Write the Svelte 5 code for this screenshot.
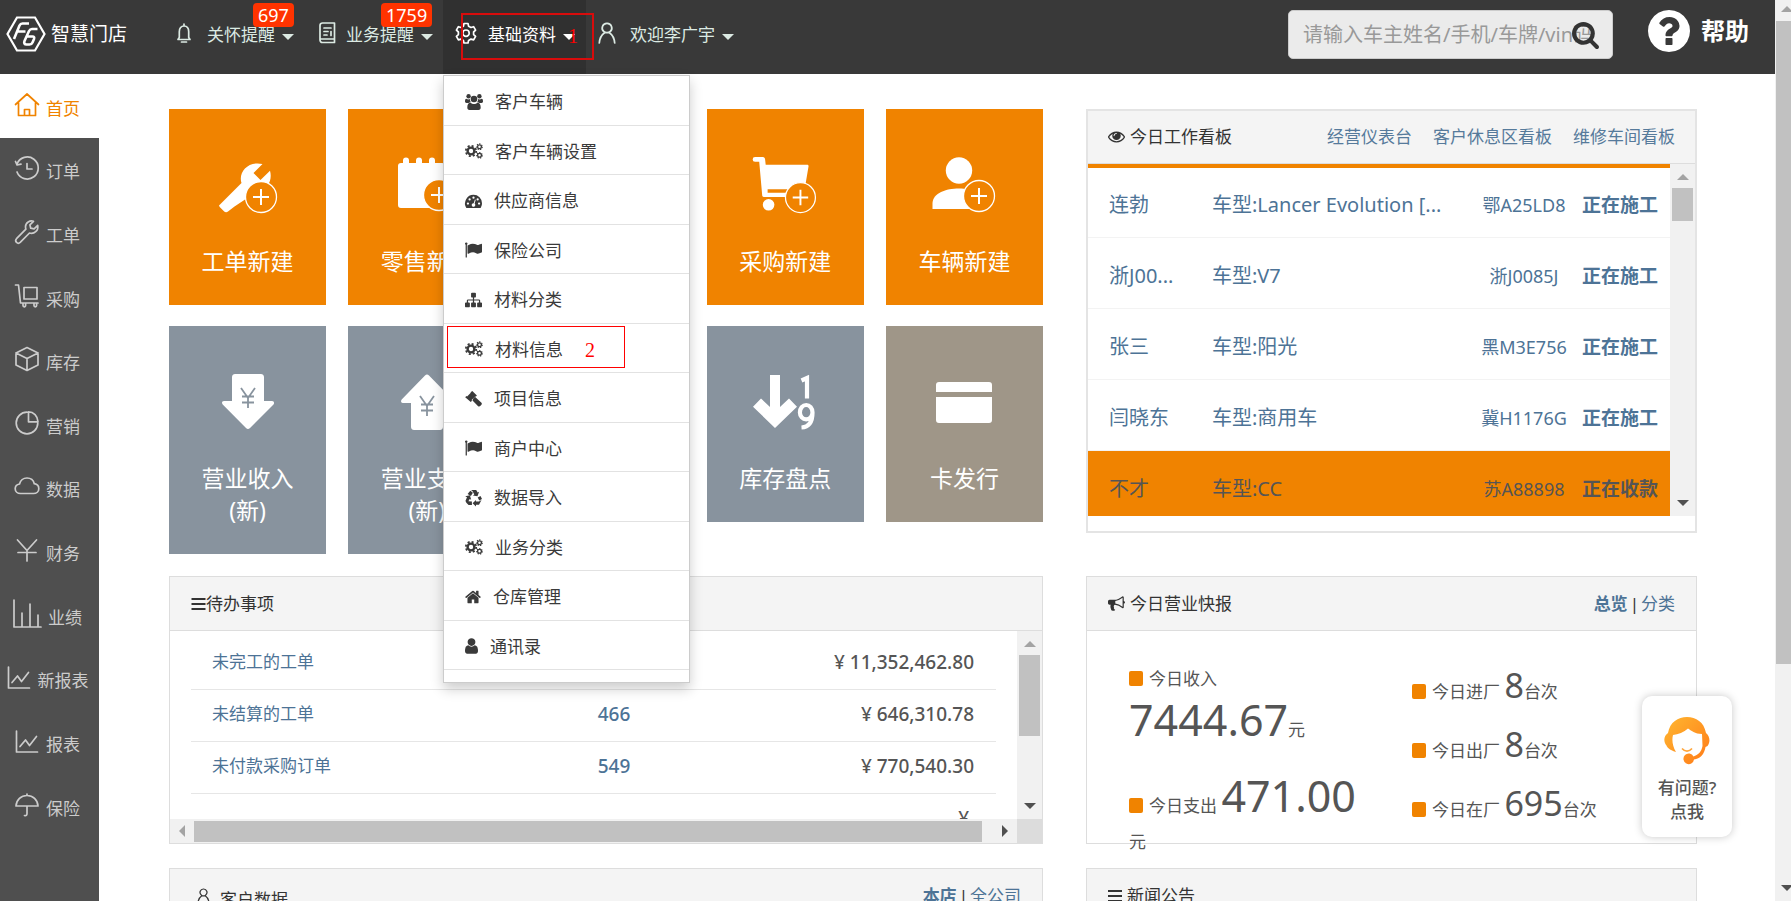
<script>
  const fa = (d) => `<path fill="currentColor" d="${d}"/>`;
  const gearTeeth = (cx, cy, r, w, n) => {
    const step = (2 * Math.PI * r) / n;
    return `<circle cx="${cx}" cy="${cy}" r="${r}" fill="none" stroke="currentColor" stroke-width="${w}" stroke-dasharray="${step * 0.5} ${step * 0.5}"/>`;
  };
  const plus = (cx, cy, bg) =>
    `<circle cx="${cx}" cy="${cy}" r="15.500" fill="${bg}" stroke="#fff" stroke-width="1.300"/><path d="M${cx - 8} ${cy}h16M${cx} ${cy - 8}v16" stroke="#fff" stroke-width="2" fill="none"/>`;
  const line = (d) =>
    `<path d="${d}" fill="none" stroke="currentColor" stroke-width="1.700" stroke-linecap="round" stroke-linejoin="round"/>`;

  const cogs =
    `<circle cx="6" cy="7.500" r="3.400" fill="none" stroke="currentColor" stroke-width="2.400"/>` +
    gearTeeth(6, 7.5, 5.2, 1.8, 8) +
    `<circle cx="14.500" cy="3.200" r="1.900" fill="none" stroke="currentColor" stroke-width="1.300"/>` +
    gearTeeth(14.5, 3.2, 2.8, 1.1, 7) +
    `<circle cx="14.500" cy="11.800" r="1.900" fill="none" stroke="currentColor" stroke-width="1.300"/>` +
    gearTeeth(14.5, 11.8, 2.8, 1.1, 7);

  const glyphs = {
    user: ['256 128 1280 1536', fa('M1536 1399q0 109-62.500 187t-150.500 78h-854q-88 0-150.500-78t-62.500-187q0-85 8.500-160.500t31.500-152 58.500-131 94-89 134.500-34.500q131 128 313 128t313-128q76 0 134.500 34.500t94 89 58.500 131 31.500 152 8.500 160.500zm-256-887q0 159-112.500 271.500t-271.500 112.500-271.500-112.500-112.500-271.500 112.500-271.500 271.500-112.500 271.500 112.500 112.500 271.500z')],
    home: ['64 128 1664 1536', fa('M1472 992v480q0 26-19 45t-45 19h-384v-384h-256v384h-384q-26 0-45-19t-19-45v-480q0-1 .5-3t.5-3l575-474 575 474q1 2 1 6zm223-69l-62 74q-8 9-21 11h-3q-13 0-21-7l-692-577-692 577q-12 8-24 7-13-2-21-11l-62-74q-8-10-7-23.500t11-21.500l719-599q32-26 76-26t76 26l244 204v-195q0-14 9-23t23-9h192q14 0 23 9t9 23v408l219 182q10 8 11 21.500t-7 23.500z')],
    flag: ['64 128 1728 1536', fa('M320 256q0 72-64 110v1266q0 13-9.500 22.500t-22.500 9.500h-64q-13 0-22.500-9.500t-9.500-22.500v-1266q-64-38-64-110 0-53 37.500-90.500t90.500-37.500 90.500 37.500 37.500 90.500zm1472 64v763q0 25-12.500 38.500t-39.500 27.500q-215 116-369 116-61 0-123.500-22t-108.500-48-115.500-48-142.500-22q-192 0-464 146-17 9-33 9-26 0-45-19t-19-45v-742q0-32 31-55 21-14 79-43 236-120 421-120 107 0 200 29t219 88q38 19 88 19 54 0 117.500-21t110-47 88-47 54.500-21q26 0 45 19t19 45z')],
    sitemap: ['0 128 1792 1536', fa('M1792 1248v320q0 40-28 68t-68 28h-320q-40 0-68-28t-28-68v-320q0-40 28-68t68-28h96v-192h-512v192h96q40 0 68 28t28 68v320q0 40-28 68t-68 28h-320q-40 0-68-28t-28-68v-320q0-40 28-68t68-28h96v-192h-512v192h96q40 0 68 28t28 68v320q0 40-28 68t-68 28h-320q-40 0-68-28t-28-68v-320q0-40 28-68t68-28h96v-192q0-52 38-90t90-38h512v-192h-96q-40 0-68-28t-28-68v-320q0-40 28-68t68-28h320q40 0 68 28t28 68v320q0 40-28 68t-68 28h-96v192h512q52 0 90 38t38 90v192h96q40 0 68 28t28 68z')],
    search: ['64 128 1664 1664', fa('M1216 832q0-185-131.500-316.500t-316.500-131.500-316.500 131.500-131.500 316.500 131.500 316.500 316.500 131.500 316.500-131.500 131.500-316.500zm512 832q0 52-38 90t-90 38q-54 0-90-38l-343-342q-179 124-399 124-143 0-273.500-55.500t-225-150-150-225-55.500-273.500 55.500-273.500 150-225 225-150 273.500-55.500 273.500 55.500 225 150 150 225 55.500 273.500q0 220-124 399l343 343q37 37 37 90z')],
    question: ['128 128 1536 1536', fa('M1024 1376v-192q0-14-9-23t-23-9h-192q-14 0-23 9t-9 23v192q0 14 9 23t23 9h192q14 0 23-9t9-23zm256-672q0-88-55.500-163t-138.500-116-170-41q-243 0-371 213-15 24 8 42l132 100q7 6 19 6 16 0 25-12 53-68 86-92 34-24 86-24 48 0 85.500 26t37.500 59q0 38-20 61t-68 45q-63 28-115.500 86.500t-52.500 125.500v36q0 14 9 23t23 9h192q14 0 23-9t9-23q0-19 21.500-49.500t54.500-49.500q32-18 49-28.500t46-35 44.500-48 28-60.500 12.500-81zm384 192q0 209-103 385.500t-279.500 279.500-385.500 103-385.500-103-279.500-279.500-103-385.500 103-385.500 279.500-279.500 385.500-103 385.500 103 279.500 279.500 103 385.500z')],
    eye: ['0 384 1792 1152', fa('M1664 960q-152-236-381-353 61 104 61 225 0 185-131.500 316.500t-316.500 131.500-316.500-131.500-131.500-316.500q0-121 61-225-229 117-381 353 133 205 333.500 326.500t434.500 121.500 434.500-121.500 333.500-326.500zm-720-384q0-20-14-34t-34-14q-125 0-214.500 89.500t-89.500 214.500q0 20 14 34t34 14 34-14 14-34q0-86 61-147t147-61q20 0 34-14t14-34zm848 384q0 34-20 69-140 230-376.500 368.500t-499.500 138.500-499.500-139-376.500-368q-20-35-20-69t20-69q140-229 376.500-368t499.500-139 499.500 139 376.500 368q20 35 20 69z')],
    bullhorn: ['0 128 1792 1536', fa('M1664 640q53 0 90.500 37.500t37.500 90.500-37.500 90.500-90.500 37.500v384q0 52-38 90t-90 38q-417-347-812-380-58 19-91 66t-31 100.500 40 92.500q-20 33-23 65.500t6 58 33.500 55 48 50 61.500 50.500q-29 58-111.500 83t-168.500 11.500-132-55.500q-7-23-29.500-87.500t-32-94.500-23-89-15-101 3.500-98.500 22-110.500h-122q-66 0-113-47t-47-113v-192q0-66 47-113t113-47h480q435 0 896-384 52 0 90 38t38 90v384zm-128 604v-954q-394 302-768 343v270q377 42 768 341z')],
    cogs: ['0 0 18 15', cogs],
    users: ['0 0 18 16', `<g fill="currentColor"><circle cx="9" cy="5" r="3.300"/><path d="M4.500 16C3 16 2.300 15 2.300 13.600c0-3 1-4.900 3.200-4.900 1 .9 2.200 1.300 3.500 1.300s2.500-.4 3.500-1.300c2.200 0 3.200 1.900 3.200 4.900 0 1.400-.7 2.400-2.200 2.400z"/><circle cx="3.600" cy="2.300" r="2.200"/><circle cx="14.400" cy="2.300" r="2.200"/><path d="M1.500 9C.5 9 0 8.500 0 7.600 0 6 .3 4.800 1.300 4.800c1.200.8 2.500.9 3.600.3 0 1.400.3 2.400 1 3.100-1 0-1.800.2-2.400.8zM16.500 9c1 0 1.500-.5 1.500-1.400 0-1.600-.3-2.800-1.300-2.800-1.200.8-2.500.9-3.600.3 0 1.400-.3 2.400-1 3.100 1 0 1.800.2 2.400.8z"/></g>`],
    gauge: ['0 0 18 15', `<path fill="currentColor" fill-rule="evenodd" d="M9 1a9 9 0 0 1 9 9c0 1.700-.5 3.300-1.300 4.600-.2.300-.4.400-.7.400H2c-.3 0-.5-.1-.7-.4A9 9 0 0 1 9 1zM3.100 9a1.200 1.200 0 1 0 0 2.400 1.200 1.200 0 0 0 0-2.400zM4.900 4.600a1.200 1.200 0 1 0 0 2.400 1.200 1.200 0 0 0 0-2.400zM9 2.800a1.200 1.200 0 1 0 0 2.400 1.200 1.200 0 0 0 0-2.400zM13.400 4.600a1.200 1.200 0 1 0 0 2.400 1.200 1.200 0 0 0 0-2.400zM14.900 9a1.200 1.200 0 1 0 0 2.400 1.200 1.200 0 0 0 0-2.400zM10.500 5.800l-1.300 4a1.900 1.900 0 1 0 1 .4l1.200-4z"/>`],
    gavel: ['0 0 17 16', `<g fill="currentColor"><path d="M7.300 0l4.600 4.600-1.200 1.200-.6-.3L6.600 9l.4.700-1.200 1.200L.2 6.300l1.200-1.200.7.300L5.800 1.800l-.2-.6z"/><path d="M8.200 7.400l1.700-1.700 6.300 5.700c.8.800.9 1.700.2 2.400l-1.200 1.300c-.7.700-1.600.6-2.300-.2L7.500 9.600z"/></g>`],
    recycle: ['0 0 17 16', `<g fill="currentColor"><path d="M6 0h5.200l1.500 2.500 1.400-.8-1.600 4.600-4.600-.8 1.400-.9L7.400.9z"/><path d="M5.300.7l2.600 2-2 3.300-3.300-1.900z"/><path d="M.2 6.200l4.700-1 1.300 4.500-1.500-.7-1.300 2.300 3.500.2V15H3.600C1.800 13.500.5 11.500.5 10.700L2 7.300z"/><path d="M16.500 10l-2.500 4.800h-3V16.500L7.600 13.200l3.400-3.300v1.700h3z"/><path d="M12.700 7.600l2.800-1.700 1.500 3-2.700 1.500z"/></g>`],
    bars: ['0 0 14 14', `<path fill="currentColor" d="M0 1h14v2H0zM0 6h14v2H0zM0 11h14v2H0z"/>`],
    person: ['0 0 18 22', line('M9 1.300a4.700 4.700 0 0 1 3 8.400c-.7.700-1.600 1-3 1s-2.300-.3-3-1a4.700 4.700 0 0 1 3-8.400zM1.300 21c.3-4.700 2-8 5.300-10.300M16.700 21c-.3-4.700-2-8-5.300-10.300')],
    bell: ['0 0 14 21', line('M7 1v1.500M1 16.500h12l-1.300-2V8.700C11.700 5 9.800 3 7 3S2.300 5 2.300 8.700v5.800zM4.500 19h5')],
    note: ['0 0 17 22', line('M3.500 1h12v19.500H3.500C2 20.500 1 19.500 1 18V3.500C1 2 2 1 3.500 1zM1.200 17H15M5 6h7M5 9.500h4M5 13h3M12 9.500v4')],
    gear: ['0 0 20 22', line('M8 1.500h4l.6 2.700 2.400 1.300 2.600-.8 2 3.500-2 1.800v2.600l2 1.800-2 3.500-2.600-.8-2.400 1.300L12 21H8l-.6-2.600L5 17.100l-2.600.8-2-3.500 2-1.800V10l-2-1.800 2-3.500 2.600.8 2.400-1.300zM10 8a3.200 3.200 0 1 1 0 6.400A3.200 3.200 0 0 1 10 8z')],
    s_home: ['0 0 26 26', line('M1.500 12.500L13 2l11.500 10.500M4.500 11v12.500h17V11M10.500 23.500v-6h5v6')],
    s_history: ['0 0 26 26', line('M3 9A11 11 0 1 1 3 17M1.500 6.500L3 10l4-.8M13 8.500V14h5')],
    s_wrench: ['0 0 26 26', line('M19.500 2.300c-3.500-1.300-8 1.300-8 5.500 0 1 .1 1.700.4 2.400L2.500 19.700c-2.300 2.700 1.200 6 3.700 3.700l9.300-9.400c4.500 1.500 9.300-2.400 8.200-7.600l-3.600 3.400-3.400-.6-.8-3.400z')],
    s_cart: ['0 0 26 26', line('M1.500 2h3l2 18h17.500M10 4.500h13v11.500H10zM9 20v2.500a1.300 1.300 0 0 0 2.600 0V20M20 20v2.500a1.300 1.300 0 0 0 2.600 0V20')],
    s_box: ['0 0 26 26', line('M13 1.500l11 5.500v12l-11 5.500L2 19V7zM2 7l11 5.500L24 7M13 12.500v12')],
    s_pie: ['0 0 26 26', line('M13 2.200a10.800 10.800 0 1 0 10.800 10.800M14.500 1.800v10h9.500M14.500 1.800c5 0 9.300 4 9.500 10')],
    s_cloud: ['0 0 26 26', line('M6.500 20.500c-3 0-5.300-2-5.300-4.800 0-2.400 1.700-4.300 4.300-4.700C6.500 7.400 9.200 5 13 5c4 0 6.500 2.400 7.300 5.700 2.500.4 4.500 2.300 4.500 5 0 2.800-2.300 4.800-5.300 4.800z')],
    s_yen: ['0 0 26 26', line('M3.500 3L13 13.500 22.500 3M13 13.500V24M4 15.500h18')],
    s_bars: ['0 0 30 30', line('M2 1v27h27M10 14v14M18 5v23M26 16v12')],
    s_line: ['0 0 26 26', line('M2.500 3v21h21M6 18.500L11.500 12l4 5.500 7-9')],
    s_umbrella: ['0 0 26 26', line('M2 14C2.500 7.500 7 3.500 13 3.500S23.500 7.500 24 14zM13 2v1M13 14v7.500c0 1.800-.9 2.500-2.500 2')],
    t_wrench: ['0 0 60 56', `<path fill="#fff" d="M1 48.500L23.500 26C20 15.500 30 3.500 44.500 7L35.500 16l7 7L52 13.800c2.600 9-2 18.500-11 19.600L16.500 49.500 10 54.500c-1.500 1.300-3 .8-4.300-.6l-4-4z"/>${plus(43, 40, '#f08300')}`],
    t_pad: ['0 0 60 56', `<path fill="#fff" d="M4 6h2V3.500a3 3 0 0 1 6 0V6h7V3.500a3 3 0 0 1 6 0V6h7V3.500a3 3 0 0 1 6 0V6h7a3 3 0 0 1 3 3v39a3 3 0 0 1-3 3H4a3 3 0 0 1-3-3V9a3 3 0 0 1 3-3z"/>${plus(42, 38, '#f08300')}`],
    t_cart: ['0 0 68 58', `<path fill="#fff" fill-rule="evenodd" d="M3 0h8c1.500 0 2.300 1 2.400 2.500L14 8h43c1 0 1.600.8 1.400 1.700L53 41.500H12c-1 0-1.500-.6-1.600-1.500L7.300 5H3a2.400 2.400 0 0 1 0-5zM16 33.500V37h32l1-3.500z"/><circle cx="17" cy="49.500" r="6" fill="#fff"/>${plus(50, 42, '#f08300')}`],
    t_person: ['0 0 64 56', `<circle cx="27" cy="13.500" r="13.200" fill="#fff"/><path fill="#fff" d="M.5 52v-6C1 36 14 31.500 27 31.500S52 36 53 46v6z"/>${plus(47, 39, '#f08300')}`],
    t_down: ['0 0 52 56', `<path fill="#fff" d="M13 0h26c1.500 0 3 1.300 3 3v24h8c2 0 2.700 2 1.500 3.500L28 54c-1.300 1.300-2.700 1.300-4 0L.7 30.500C-.6 29 0 27 2 27h8V3c0-1.700 1.500-3 3-3z"/><path d="M19 14l7 10 7-10M26 24v10M20 22.500h12M20 28.500h12" fill="none" stroke="#88939e" stroke-width="1.800"/>`],
    t_up: ['0 0 52 56', `<path fill="#fff" d="M13 56h26c1.500 0 3-1.300 3-3V29h8c2 0 2.700-2 1.500-3.500L28 1.500c-1.300-1.300-2.700-1.300-4 0L.7 25.500C-.6 27 0 29 2 29h8v24c0 1.700 1.500 3 3 3z"/><path d="M19 22l7 10 7-10M26 32v10M20 30.500h12M20 36.500h12" fill="none" stroke="#88939e" stroke-width="1.800"/>`],
    t_sort: ['0 0 64 56', `<path fill="#fff" d="M17 1h10v32l9-8.500 8 8.200L22 54 0 32.700l8-8.200L17 33z"/><path fill="none" stroke="#fff" stroke-width="4.200" d="M48.500 6.500l5.500-2.500v20.500M59.500 38.500a6.300 7.500 0 1 0-12.600 0 6.300 6.800 0 0 0 12.600 0c0 9-3 14.500-11 15"/>`],
    t_card: ['0 0 56 56', `<path fill="#fff" d="M3 8h50a3 3 0 0 1 3 3v7H0v-7a3 3 0 0 1 3-3zM0 23h56v23a3 3 0 0 1-3 3H3a3 3 0 0 1-3-3z"/>`],
    agent: ['0 0 46 46', `<defs><linearGradient id="hair" x1="0" y1="0" x2="1" y2="1"><stop offset="0" stop-color="#ffb730"/><stop offset="1" stop-color="#ff7a18"/></linearGradient></defs><path fill="url(#hair)" d="M4 16C6 5 14 0 23 0s17 5 19 16c4 3 4.500 9.500 1.500 13l-2 1C40.500 37 36 42 30 42.500a5.300 5.300 0 1 1-.5-3C34 38 37.500 35 38.500 29l-.5-12C31 17 27 13.500 24 11.500 20 15 14 17.500 9 18c-1.300 5-.5 11 3 17C5 33 3 30 2.500 28.500-.7 25-.5 19 4 16z"/><path d="M18 31.500c3 3.500 7 3.500 10 0" fill="none" stroke="#ffa53a" stroke-width="1.600"/>`]
  };

  const side = [
    ['s_home', '首页'], ['s_history', '订单'], ['s_wrench', '工单'], ['s_cart', '采购'],
    ['s_box', '库存'], ['s_pie', '营销'], ['s_cloud', '数据'], ['s_yen', '财务'],
    ['s_bars', '业绩'], ['s_line', '新报表'], ['s_line', '报表'], ['s_umbrella', '保险']
  ];
  const menu = [
    ['users', '客户车辆', 18], ['cogs', '客户车辆设置', 18], ['gauge', '供应商信息', 17], ['flag', '保险公司', 17],
    ['sitemap', '材料分类', 17], ['cogs', '材料信息', 18], ['gavel', '项目信息', 17], ['flag', '商户中心', 17],
    ['recycle', '数据导入', 17], ['cogs', '业务分类', 18], ['home', '仓库管理', 16], ['user', '通讯录', 13]
  ];
  const tiles = [
    ['t_wrench', '工单新建', '', 'orange', 1, 60], ['t_pad', '零售新建', '', 'orange', 2, 60],
    ['t_cart', '采购新建', '', 'orange', 4, 68], ['t_person', '车辆新建', '', 'orange', 5, 64],
    ['t_down', '营业收入', '(新)', 'slate', 1, 52], ['t_up', '营业支出', '(新)', 'slate', 2, 52],
    ['t_sort', '库存盘点', '', 'slate', 4, 64], ['t_card', '卡发行', '', 'taupe', 5, 56]
  ];
  const jobs = [
    ['连勃', '车型:Lancer Evolution [...', '鄂A25LD8', '正在施工'],
    ['浙J00...', '车型:V7', '浙J0085J', '正在施工'],
    ['张三', '车型:阳光', '黑M3E756', '正在施工'],
    ['闫晓东', '车型:商用车', '冀H1176G', '正在施工'],
    ['不才', '车型:CC', '苏A88898', '正在收款']
  ];
  const todos = [
    ['未完工的工单', '', '¥ 11,352,462.80'],
    ['未结算的工单', '466', '¥ 646,310.78'],
    ['未付款采购订单', '549', '¥ 770,540.30'],
    ['', '', '¥']
  ];
  const visits = [['今日进厂', '8'], ['今日出厂', '8'], ['今日在厂', '695']];
</script>

{#snippet icon(name, w, h)}
  <svg width={w} height={h} viewBox={glyphs[name][0]} aria-hidden="true">{@html glyphs[name][1]}</svg>
{/snippet}

<div class="shell">
  <div class="page">
    <header>
      <a class="logo" href="#home">
        <svg width="40" height="36" viewBox="0 0 40 36" aria-hidden="true">
          <path d="M11 1.500h18L38.500 18 29 34.500H11L1.500 18z" fill="none" stroke="#fff" stroke-width="2.200" />
          <path d="M23 7.500h-6.500c-1.500 0-2.400.7-3 2L8 23M11.500 15.500h8M31.500 13h-5.500c-1.500 0-2.300.7-3 2l-4.500 10c-.8 2 0 3.500 2 3.500h3c1.500 0 2.500-.8 3-2l1.500-3.500c.6-1.500 0-2.500-1.500-2.500h-5" fill="none" stroke="#fff" stroke-width="2.600" />
        </svg>
        <span>智慧门店</span>
      </a>
      <nav class="top">
        <button class="bell">{@render icon('bell', 14, 21)}<span>关怀提醒</span><i class="caret"></i><b class="badge">697</b></button>
        <button class="note">{@render icon('note', 17, 22)}<span>业务提醒</span><i class="caret"></i><b class="badge">1759</b></button>
        <div class="open">
          <button>{@render icon('gear', 20, 22)}<span>基础资料</span><i class="caret"></i></button>
          <div class="mark"><em>1</em></div>
          <ul class="menu">
            {#each menu as [name, label, w], i}
              <li>
                <a href="#menu">{@render icon(name, w, 16)}<span>{label}</span></a>
                {#if i === 5}<div class="mark second"><em>2</em></div>{/if}
              </li>
            {/each}
          </ul>
        </div>
        <button class="me">{@render icon('person', 18, 22)}<span>欢迎李广宇</span><i class="caret"></i></button>
      </nav>
      <form class="search">
        <input type="text" aria-label="搜索" placeholder="请输入车主姓名/手机/车牌/vin码" />
        <button type="button" aria-label="搜索">{@render icon('search', 27, 27)}</button>
      </form>
      <a class="help" href="#help">{@render icon('question', 42, 42)}<span>帮助</span></a>
    </header>

    <div class="body">
      <nav class="side">
        {#each side as [name, label], i}
          <a href="#side" class:active={i === 0}>{@render icon(name, name === 's_bars' ? 30 : 26, name === 's_bars' ? 30 : 26)}<span>{label}</span></a>
        {/each}
      </nav>

      <main>
        <section class="tiles">
          {#each tiles as [name, label, extra, tone, col, w]}
            <a href="#tile" class="tile {tone} c{col}">
              {@render icon(name, w, name === 't_cart' ? 58 : 56)}
              <span>{label}</span>
              {#if extra}<span>{extra}</span>{/if}
            </a>
          {/each}
        </section>

        <section class="panel board">
          <h2>{@render icon('eye', 17, 12)}<span>今日工作看板</span>
            <span class="links"><a href="#a">经营仪表台</a><a href="#b">客户休息区看板</a><a href="#c">维修车间看板</a></span>
          </h2>
          <div class="scroll">
            <table class="jobs">
              <tbody>
                {#each jobs as [who, car, plate, state], i}
                  <tr class:hot={i === 4}><td class="who">{who}</td><td class="car">{car}</td><td class="plate">{plate}</td><td class="state">{state}</td></tr>
                {/each}
              </tbody>
            </table>
            <div class="vbar"><i class="up"></i><i class="thumb"></i><i class="down"></i></div>
          </div>
        </section>

        <section class="panel todo">
          <h2 class="tight">{@render icon('bars', 15, 14)}<span>待办事项</span></h2>
          <div class="scroll">
            <div class="rows">
              <table>
                <tbody>
                  {#each todos as [label, count, sum]}
                    <tr><td class="label">{label}</td><td class="count">{count}</td><td class="sum" class:lone={!label}>{sum}</td></tr>
                  {/each}
                </tbody>
              </table>
            </div>
            <div class="vbar"><i class="up"></i><i class="thumb"></i><i class="down"></i></div>
          </div>
          <div class="hbar"><i class="left"></i><i class="thumb"></i><i class="right"></i><i class="corner"></i></div>
        </section>

        <section class="panel report">
          <h2>{@render icon('bullhorn', 17, 15)}<span>今日营业快报</span>
            <span class="tabs"><a href="#all"><b>总览</b></a><span>|</span><a href="#kind">分类</a></span>
          </h2>
          <div class="figures">
            <div class="money">
              <p><i class="dot"></i>今日收入<br /><strong>7444.67</strong>元</p>
              <p><i class="dot"></i>今日支出 <strong>471.00</strong><br />元</p>
            </div>
            <div class="visits">
              {#each visits as [label, n]}
                <p><i class="dot"></i>{label} <strong>{n}</strong>台次</p>
              {/each}
            </div>
          </div>
        </section>

        <section class="panel">
          <h2 class="low">{@render icon('person', 13, 18)}<span class="drop">客户数据</span>
            <span class="tabs"><a href="#shop"><b>本店</b></a><span>|</span><a href="#corp">全公司</a></span>
          </h2>
        </section>
        <section class="panel">
          <h2>{@render icon('bars', 14, 14)}<span>新闻公告</span></h2>
        </section>
      </main>
    </div>

    <button class="float">{@render icon('agent', 46, 46)}<span>有问题?<br />点我</span></button>
  </div>
  <div class="pagebar"><i class="up"></i><i class="thumb"></i><i class="down"></i></div>
</div>

<style>
  :global(body) { margin: 0; overflow: hidden; }
  .shell {
    display: flex; height: 100vh; overflow: hidden; background: #fff; color: #333;
    font: 17px/24px "Noto Sans", "Noto Sans CJK SC", sans-serif;
  }
  .shell *, .shell { box-sizing: border-box; }
  a { color: inherit; text-decoration: none; }
  button { border: 0; padding: 0; background: none; color: inherit; font: inherit; cursor: pointer; }
  i, em { font-style: normal; }
  ul, p, h2 { margin: 0; padding: 0; list-style: none; }
  svg { display: block; flex: none; overflow: visible; }
  .page { flex: 1; min-width: 0; display: flex; flex-direction: column; position: relative; }

  header { height: 74px; flex: none; display: flex; background: #393939; color: #dceae3; position: relative; z-index: 2; }
  .logo { display: flex; align-items: center; gap: 5px; width: 166px; padding: 0 0 6px 6px; color: #fff; font-size: 19px; }
  .top { display: flex; flex: 1; }
  .top button { display: flex; align-items: center; height: 100%; padding-bottom: 8px; position: relative; white-space: nowrap; }
  .top button span { padding-top: 4px; }
  .caret { border: 6px solid transparent; border-top-color: currentColor; border-bottom: 0; margin: 8px 0 0 7px; }
  .bell { width: 153px; padding-left: 11px; }
  .bell span { margin-left: 16px; }
  .note { width: 124px; }
  .note span { margin-left: 10px; }
  .badge {
    position: absolute; top: 3px; left: 87px; padding: 0 5px; border-radius: 4px; background: #f30;
    color: #fff; font-weight: 400; font-size: 18px; line-height: 24px;
  }
  .note .badge { left: 62px; }
  .open { position: relative; width: 143px; padding-left: 13px; background: #303030; color: #fff; }
  .open button span { margin-left: 12px; }
  .me { margin-left: 12px; }
  .me span { margin-left: 14px; }
  .mark { position: absolute; left: 18px; top: 13px; width: 133px; height: 47px; border: 2px solid #d80c0c; pointer-events: none; }
  .mark em { position: absolute; right: 14px; top: 9px; color: #f00; font: 20px/24px "Liberation Serif", serif; }
  .mark.second { left: 3px; top: 2px; width: 178px; height: 42px; border: 1px solid #f00; }
  .mark.second em { right: 29px; top: 11px; }

  .menu {
    position: absolute; left: 0; top: 75px; width: 247px; padding-bottom: 12px; background: #fff; color: #3a3a3a;
    border: 1px solid #ccc; box-shadow: 0 6px 12px rgba(0, 0, 0, 0.2); line-height: 1.5;
  }
  .menu li { position: relative; border-bottom: 1px solid #e2e2e2; }
  .menu a { display: flex; align-items: center; gap: 12px; padding: 13px 0 10px 21px; }

  .search { position: relative; width: 325px; height: 49px; margin-top: 10px; }
  .search input {
    width: 100%; height: 100%; padding: 0 14px; border: 1px solid #ccc; border-radius: 5px; background: #ebebeb;
    font: inherit; font-size: 20px; color: #555;
  }
  .search input::placeholder { color: #999; opacity: 1; }
  .search button { position: absolute; right: 14px; top: 12px; color: #333; }
  .help { display: flex; gap: 11px; width: 162px; padding: 10px 0 0 35px; color: #fff; font-size: 24px; font-weight: 700; line-height: 42px; white-space: nowrap; }

  .body { flex: 1; min-height: 0; display: flex; }
  .side { width: 99px; flex: none; display: grid; grid-template-rows: repeat(13, 1fr); background: #4f4f4f; color: #ccc; }
  .side a { display: flex; align-items: center; justify-content: center; gap: 6px; padding: 0 5px 2px 0; }
  .side span { padding-top: 8px; }
  .side .active { background: #fff; color: #f08300; }

  main {
    flex: 1; min-width: 0; display: grid; grid-template-columns: 874fr 611fr; gap: 22px 43px; align-content: start;
    padding: 35px 78px 0 70px; overflow: hidden;
  }
  .tiles { display: grid; grid-template-columns: repeat(5, minmax(0, 1fr)); gap: 21px 22px; align-items: start; }
  .tile { display: flex; flex-direction: column; align-items: center; padding: 48px 0 28px; color: #fff; font-size: 23px; line-height: 32px; }
  .tile svg { margin-bottom: 32px; height: 56px; }
  .orange { background: #f08300; }
  .slate { background: #88939e; }
  .taupe { background: #9f9688; }
  .c1 { grid-column: 1; }
  .c2 { grid-column: 2; }
  .c4 { grid-column: 4; }
  .c5 { grid-column: 5; }

  .panel { border: 1px solid #ddd; align-self: start; min-width: 0; }
  .panel h2 {
    display: flex; align-items: center; gap: 5px; height: 54px; padding: 0 21px; background: #f4f4f4;
    border-bottom: 1px solid #ddd; font-size: 17px; font-weight: 400; white-space: nowrap;
  }
  .panel h2.tight { gap: 0; }
  .panel h2.low { gap: 10px; padding-left: 27px; }
  .drop { padding-top: 8px; }
  .links { margin-left: auto; display: flex; gap: 21px; color: #567a9b; }
  .tabs { margin-left: auto; display: flex; gap: 2px; }
  .tabs a { color: #4d7396; }
  .scroll { display: flex; overflow: hidden; }

  table { border-collapse: collapse; width: 100%; }
  td { padding: 0; white-space: nowrap; }
  .board { height: 424px; border-width: 2px; border-color: #e4e4e4; }
  .board h2 { padding: 0 20px; height: 53px; }
  .board .scroll { height: 352px; }
  .jobs { border-top: 4px solid #f08300; color: #4d7396; }
  .jobs td { height: 71px; padding-top: 6px; border-bottom: 1px solid #f3f3f3; }
  .who { width: 124px; padding-left: 21px; font-size: 20px; }
  .car { font-size: 20px; }
  .plate { width: 96px; font-size: 18px; text-align: center; }
  .state { width: 98px; padding-left: 10px; font-size: 19px; font-weight: 700; }
  .hot { background: #f08300; color: #555; }

  .vbar { width: 25px; flex: none; display: flex; flex-direction: column; align-items: center; background: #f1f1f1; }
  .up, .down { border: 6px solid transparent; }
  .up { border-bottom-color: #a3a3a3; border-top: 0; margin: 10px 0 8px; }
  .down { border-top-color: #505050; border-bottom: 0; margin: auto 0 10px; }
  .thumb { background: #c1c1c1; }
  .vbar .thumb { width: 21px; height: 33px; }

  .todo, .report { height: 268px; margin-bottom: 2px; }
  .todo .scroll { height: 188px; }
  .todo .vbar .thumb { height: 81px; }
  .rows { flex: 1; min-width: 0; padding: 6px 21px 0; }
  .rows td { height: 52px; border-bottom: 1px solid #e6e6e6; }
  .rows .label { width: 330px; padding: 0 0 2px 21px; color: #4d7396; }
  .rows .count { width: 186px; padding-bottom: 2px; text-align: center; color: #4d7396; font-size: 19px; font-weight: 500; }
  .rows .sum { padding: 0 22px 2px 0; text-align: right; color: #555; font-size: 19px; font-weight: 500; }
  .rows .lone { padding-right: 27px; }
  .hbar { display: flex; align-items: center; height: 24px; background: #f1f1f1; }
  .hbar .thumb { flex: 1; height: 21px; }
  .left, .right { border: 6px solid transparent; }
  .left { border-right-color: #a3a3a3; border-left: 0; margin: 0 9px; }
  .right { border-left-color: #505050; border-right: 0; margin: 0 9px 0 20px; }
  .corner { width: 25px; height: 24px; background: #dcdcdc; }

  .figures { display: flex; padding: 0 42px; color: #555; white-space: nowrap; }
  .money { width: 283px; padding-top: 30px; }
  .dot { display: inline-block; width: 14px; height: 15px; margin-right: 6px; border-radius: 2px; background: #f08300; vertical-align: -1px; }
  strong { font-weight: 400; font-size: 43px; line-height: 46px; }
  .money p { line-height: 36px; }
  .money p + p { margin-top: 25px; }
  .visits { padding-top: 31px; }
  .visits p { line-height: 59px; }
  .visits strong { font-size: 34px; line-height: 34px; }

  .float {
    position: absolute; right: 43px; bottom: 64px; width: 90px; height: 141px; display: flex; flex-direction: column;
    align-items: center; justify-content: center; gap: 13px; padding-top: 8px; border-radius: 10px; background: #fff; color: #555;
    font-weight: 500; box-shadow: 0 0 8px rgba(0, 0, 0, 0.22);
  }

  .pagebar { width: 16px; flex: none; overflow: hidden; background: #f1f1f1; display: flex; flex-direction: column; align-items: flex-start; }
  .pagebar .up { margin: 6px 0 9px 6px; }
  .pagebar .thumb { width: 15px; height: 643px; margin-left: 1px; }
  .pagebar .down { margin: auto 0 10px 6px; }
</style>
